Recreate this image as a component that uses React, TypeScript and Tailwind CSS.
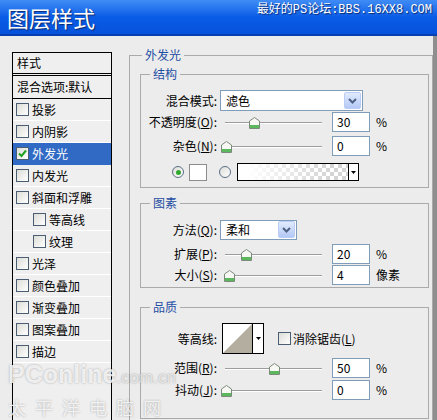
import type { ReactNode } from "react";

type ListItem = { label: string; checked?: boolean; selected?: boolean; indent?: boolean };

const LIST_ITEMS: ListItem[] = [
  { label: "投影" },
  { label: "内阴影" },
  { label: "外发光", checked: true, selected: true },
  { label: "内发光" },
  { label: "斜面和浮雕" },
  { label: "等高线", indent: true },
  { label: "纹理", indent: true },
  { label: "光泽" },
  { label: "颜色叠加" },
  { label: "渐变叠加" },
  { label: "图案叠加" },
  { label: "描边" },
];

function CheckBox({ checked }: { checked?: boolean }) {
  return (
    <span className="flex h-[13px] w-[13px] shrink-0 items-center justify-center border border-[#4a5d72] bg-gradient-to-br from-[#dcdcd7] to-white">
      {checked && (
        <svg width="9" height="9" viewBox="0 0 9 9">
          <path d="M1 4.5 L3.5 7 L8 1.5" fill="none" stroke="#21a121" strokeWidth="2" />
        </svg>
      )}
    </span>
  );
}

function Radio({ checked }: { checked?: boolean }) {
  return (
    <span className="flex h-[12px] w-[12px] shrink-0 items-center justify-center rounded-full border border-[#5a6e86] bg-gradient-to-br from-[#dcdcd7] to-white">
      {checked && <span className="h-[5px] w-[5px] rounded-full bg-[#2fa82f]" />}
    </span>
  );
}

function DropButton() {
  return (
    <span className="ml-auto mr-[1px] flex h-[17px] w-[17px] items-center justify-center rounded-[2px] border border-[#b9cdf7] bg-gradient-to-b from-[#e2ebfd] to-[#b3c8f5]">
      <svg width="9" height="6" viewBox="0 0 9 6">
        <path d="M1 1 L4.5 4.5 L8 1" fill="none" stroke="#4d6185" strokeWidth="2" />
      </svg>
    </span>
  );
}

function Thumb() {
  return (
    <svg width="11" height="12" viewBox="0 0 11 12">
      <path d="M0.5 4 L5.5 0.5 L10.5 4 L10.5 11.5 L0.5 11.5 Z" fill="#f7f7f4" stroke="#7c8a7c" />
      <rect x="1" y="8" width="9" height="3" fill="#5cb85c" />
    </svg>
  );
}

function Label({ children }: { children: ReactNode }) {
  return <span className="w-[76px] shrink-0 text-right">{children}</span>;
}

function NumBox({ value }: { value: string }) {
  return (
    <span className="flex h-[20px] w-[38px] shrink-0 items-center border border-[#7f9db9] bg-white pl-[4px]">
      {value}
    </span>
  );
}

// thumb: centre of the thumb, in px from the slider box's left edge
function SliderRow({ label, thumb, value, unit, className }: { label: ReactNode; thumb: number; value: string; unit: string; className: string }) {
  return (
    <div className={"flex h-[20px] items-center " + className}>
      <Label>{label}</Label>
      <div className="relative ml-[4px] h-[20px] w-[111px] shrink-0">
        <div className="ml-[4px] mt-[10px] h-[2px] w-[97px] border-t border-b border-t-[#9d9d9d] border-b-white" />
        <div className="absolute top-[5px]" style={{ left: thumb - 5 }}>
          <Thumb />
        </div>
      </div>
      <NumBox value={value} />
      <span className="ml-[6px]">{unit}</span>
    </div>
  );
}

function Group({ title, className, children }: { title: string; className: string; children: ReactNode }) {
  return (
    <fieldset className={"ml-[10px] w-[289px] border border-[#aaaaaa] " + className}>
      <legend className="ml-[9px] px-[3px] leading-[16px] text-[#1f4ea3]">{title}</legend>
      {children}
    </fieldset>
  );
}

function TitleBar() {
  return (
    <div className="flex h-[36px] shrink-0 items-start justify-between border-b-2 border-[#0a3fb0] bg-gradient-to-b from-[#3f8cf6] via-[#0a5ce6] to-[#0752dc] text-white">
      <span className="pl-[7px] pt-[3px] text-[22px] leading-[28px] [text-shadow:1px_1px_1px_#0b2a6e]">图层样式</span>
      <span className="pr-[5px] pt-[3px] font-['Liberation_Mono','Noto_Sans_CJK_SC',monospace] text-[12px] leading-[15px] [text-shadow:1px_1px_1px_#0b2a6e]">
        最好的PS论坛:BBS.16XX8.COM
      </span>
    </div>
  );
}

function StyleList() {
  return (
    <div className="ml-[12px] mt-[16px] h-[400px] w-[100px] shrink-0 border border-black bg-[#efefef]">
      <div className="flex h-[23px] items-center border-b-[3px] border-double border-black pl-[4px]">样式</div>
      <div className="flex h-[23px] items-center border-b border-black pl-[4px]">混合选项:默认</div>
      {LIST_ITEMS.map((item) => (
        <div
          key={item.label}
          className={
            "flex h-[22px] items-center gap-[3px] border-b " +
            (item.indent ? "pl-[20px] " : "pl-[3px] ") +
            (item.selected ? "border-[#316ac5] bg-[#316ac5] text-white" : "border-white")
          }
        >
          <CheckBox checked={item.checked} />
          <span>{item.label}</span>
        </div>
      ))}
    </div>
  );
}

const GRADIENT_BOX =
  "bg-[linear-gradient(to_right,#ffffff_8%,rgba(255,255,255,0)_85%),repeating-conic-gradient(#d4d4d4_0_25%,#ffffff_0_50%)] [background-size:100%_100%,8px_8px]";

function GlowPanel() {
  return (
    <fieldset className="ml-[17px] mt-[11px] h-[420px] w-[304px] shrink-0 border border-[#aaaaaa]">
      <legend className="ml-[12px] px-[3px] leading-[16px] text-[#1f4ea3]">外发光</legend>

      <Group title="结构" className="mt-[3px] pb-[6px]">
        <div className="mt-[8px] flex h-[21px] items-center">
          <Label>混合模式:</Label>
          <span className="ml-[3px] flex h-[21px] w-[143px] items-center border border-[#7f9db9] bg-white pl-[5px]">
            滤色
            <DropButton />
          </span>
        </div>
        <SliderRow className="mt-[1px]" label={<>不透明度(<u>O</u>):</>} thumb={33} value="30" unit="%" />
        <SliderRow className="mt-[4px]" label={<>杂色(<u>N</u>):</>} thumb={5} value="0" unit="%" />
        <div className="mt-[7px] flex h-[18px] items-center">
          <span className="ml-[31px]">
            <Radio checked />
          </span>
          <span className="ml-[5px] h-[17px] w-[18px] border border-[#8c8c8c] bg-white" />
          <span className="ml-[12px]">
            <Radio />
          </span>
          <span className="ml-[6px] flex h-[18px] w-[122px] border border-black">
            <span className={"flex-1 " + GRADIENT_BOX} />
            <span className="flex w-[10px] items-center justify-center border-l border-black bg-white">
              <svg width="5" height="3" viewBox="0 0 5 3">
                <path d="M0 0 H5 L2.5 3 Z" fill="#000" />
              </svg>
            </span>
          </span>
        </div>
      </Group>

      <Group title="图素" className="mt-[7px] pb-[2px]">
        <div className="mt-[9px] flex h-[19px] items-center">
          <Label>方法(<u>Q</u>):</Label>
          <span className="ml-[3px] flex h-[20px] w-[77px] items-center border border-[#7f9db9] bg-white pl-[5px]">
            柔和
            <DropButton />
          </span>
        </div>
        <SliderRow className="mt-[5px]" label={<>扩展(<u>P</u>):</>} thumb={25} value="20" unit="%" />
        <SliderRow className="mt-[1px]" label={<>大小(<u>S</u>):</>} thumb={8} value="4" unit="像素" />
      </Group>

      <Group title="品质" className="mt-[11px] pb-[18px]">
        <div className="mt-[8px] flex h-[31px] items-center">
          <Label>等高线:</Label>
          <span className="ml-[5px] flex h-[31px] w-[42px] border border-black bg-white">
            <svg width="29" height="29" viewBox="0 0 29 29" className="shrink-0">
              <path d="M0 29 L29 0 L29 29 Z" fill="#b3ae9f" />
            </svg>
            <span className="flex flex-1 items-center justify-center border-l border-black">
              <svg width="5" height="3" viewBox="0 0 5 3">
                <path d="M0 0 H5 L2.5 3 Z" fill="#000" />
              </svg>
            </span>
          </span>
          <span className="ml-[14px]">
            <CheckBox />
          </span>
          <span className="ml-[2px]">消除锯齿(<u>L</u>)</span>
        </div>
        <SliderRow className="mt-[4px]" label={<>范围(<u>R</u>):</>} thumb={53} value="50" unit="%" />
        <SliderRow className="mt-[2px]" label={<>抖动(<u>J</u>):</>} thumb={5} value="0" unit="%" />
      </Group>
    </fieldset>
  );
}

function Watermark() {
  return (
    <div className="pointer-events-none absolute left-[8px] top-[360px] text-white/80 [text-shadow:0_0_2px_rgba(60,60,60,0.45)]">
      <div className="font-['Liberation_Sans',sans-serif] text-[25px] font-bold leading-[28px]">
        PConline<span className="text-[17px] font-normal text-white/60">.com.cn</span>
      </div>
      <div className="mt-[4px] text-[18px] leading-[22px] tracking-[9px]">太平洋电脑网</div>
    </div>
  );
}

export default function App() {
  return (
    <div className="relative flex h-[420px] w-[437px] flex-col overflow-hidden bg-[#ececec] font-['Noto_Sans_CJK_SC','Noto_Sans',sans-serif] text-[12px] leading-[16px] text-black">
      <TitleBar />
      <div className="flex flex-1 overflow-hidden">
        <div className="flex flex-1">
          <StyleList />
          <GlowPanel />
        </div>
        <div className="w-[4px] shrink-0 bg-[#8e8e8e]" />
      </div>
      <Watermark />
    </div>
  );
}
